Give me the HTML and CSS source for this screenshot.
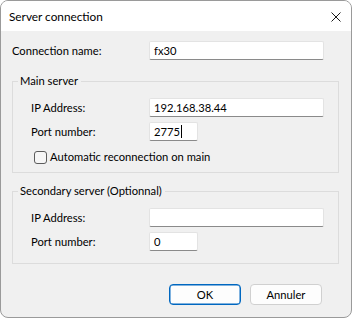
FILE: index.html
```html
<!DOCTYPE html>
<html>
<head>
<meta charset="utf-8">
<link rel="stylesheet" href="styles.css">
</head>
<body>
<div class="window">
  <div class="titlebar">
    <span class="title">Server connection</span>
    <svg class="close" width="10" height="10" viewBox="0 0 10 10"><path d="M0.5 0.5L9.5 9.5M9.5 0.5L0.5 9.5" stroke="#1a1a1a" stroke-width="1"/></svg>
  </div>
  <div class="content">
    <div class="row top-row">
      <label class="lbl">Connection name:</label>
      <div class="input wide">fx30</div>
    </div>
    <fieldset class="group main">
      <legend>Main server</legend>
      <div class="group-body">
        <div class="row">
          <label class="lbl inner">IP Address:</label>
          <div class="input wide">192.168.38.44</div>
        </div>
        <div class="row">
          <label class="lbl inner">Port number:</label>
          <div class="input narrow">2775<span class="caret"></span></div>
        </div>
        <div class="check-row">
          <span class="checkbox"></span>
          <span class="check-label">Automatic reconnection on main</span>
        </div>
      </div>
    </fieldset>
    <fieldset class="group secondary">
      <legend>Secondary server (Optionnal)</legend>
      <div class="group-body">
        <div class="row">
          <label class="lbl inner">IP Address:</label>
          <div class="input wide"></div>
        </div>
        <div class="row">
          <label class="lbl inner">Port number:</label>
          <div class="input narrow">0</div>
        </div>
      </div>
    </fieldset>
    <div class="buttons">
      <button class="btn primary">OK</button>
      <button class="btn">Annuler</button>
    </div>
  </div>
</div>
</body>
</html>
```
FILE: styles.css
```css
html, body {
  margin: 0;
  padding: 0;
  background: #ffffff;
}
body {
  font-family: Lato, "Noto Sans", sans-serif;
  font-size: 11.2px;
  color: #000;
}
.window {
  width: 352px;
  height: 318px;
  box-sizing: border-box;
  border: 1px solid #9a9a9a;
  border-radius: 8px;
  overflow: hidden;
  background: #f0f0f0;
  display: flex;
  flex-direction: column;
}
.titlebar {
  height: 30px;
  flex: none;
  background: #ffffff;
  display: flex;
  align-items: center;
  justify-content: space-between;
  padding: 0 10px 0 8px;
}
.title {
  font-size: 11.8px;
  line-height: 16px;
  margin-top: 1px;
}
.close {
  display: block;
  margin-top: 1px;
}
.content {
  padding: 10px 0 0 11px;
  display: flex;
  flex-direction: column;
}
.row {
  display: flex;
  align-items: center;
  height: 19px;
}
.lbl {
  width: 137px;
  flex: none;
  line-height: 16px;
}
.lbl.inner {
  width: 118px;
  padding-left: 18px;
  box-sizing: content-box;
}
.input {
  box-sizing: border-box;
  height: 19px;
  background: #ffffff;
  border: 1px solid #e3e3e3;
  border-bottom-color: #8a8a8a;
  border-radius: 2px;
  padding: 0 4px;
  line-height: 17px;
  display: flex;
  align-items: center;
}
.input.wide {
  width: 175px;
}
.input.narrow {
  width: 49px;
}
.caret {
  display: inline-block;
  width: 1px;
  height: 13px;
  background: #000;
  margin-left: 1px;
}
.group {
  margin: 0;
  padding: 0;
  border: 1px solid #dcdcdc;
  width: 327px;
  box-sizing: border-box;
}
.group legend {
  margin-left: 5px;
  padding: 0 3px 0 2px;
  line-height: 16px;
}
.group.main {
  margin-top: 13px;
}
.group.secondary {
  margin-top: 10px;
}
.group-body {
  display: flex;
  flex-direction: column;
  gap: 5px;
}
.main .group-body {
  padding: 9px 0 7px 0;
}
.secondary .group-body {
  padding: 9px 0 12px 0;
}
.check-row {
  display: flex;
  align-items: center;
  gap: 3px;
  height: 16px;
  margin-top: 3px;
  padding-left: 21px;
}
.checkbox {
  width: 13px;
  height: 13px;
  flex: none;
  box-sizing: border-box;
  border: 1px solid #5c5c5c;
  border-radius: 3px;
  background: #f6f6f6;
}
.check-label {
  line-height: 16px;
}
.buttons {
  display: flex;
  justify-content: flex-end;
  gap: 9px;
  margin-top: 20px;
  padding-right: 29px;
}
.btn {
  width: 72px;
  height: 21px;
  box-sizing: border-box;
  font-family: inherit;
  font-size: 11.2px;
  color: #000;
  background: #fdfdfd;
  border: 1px solid #d0d0d0;
  border-radius: 4px;
  padding: 0;
}
.btn.primary {
  border-color: #0067c0;
  box-shadow: inset 0 0 0 0.5px #0067c0;
}
```
